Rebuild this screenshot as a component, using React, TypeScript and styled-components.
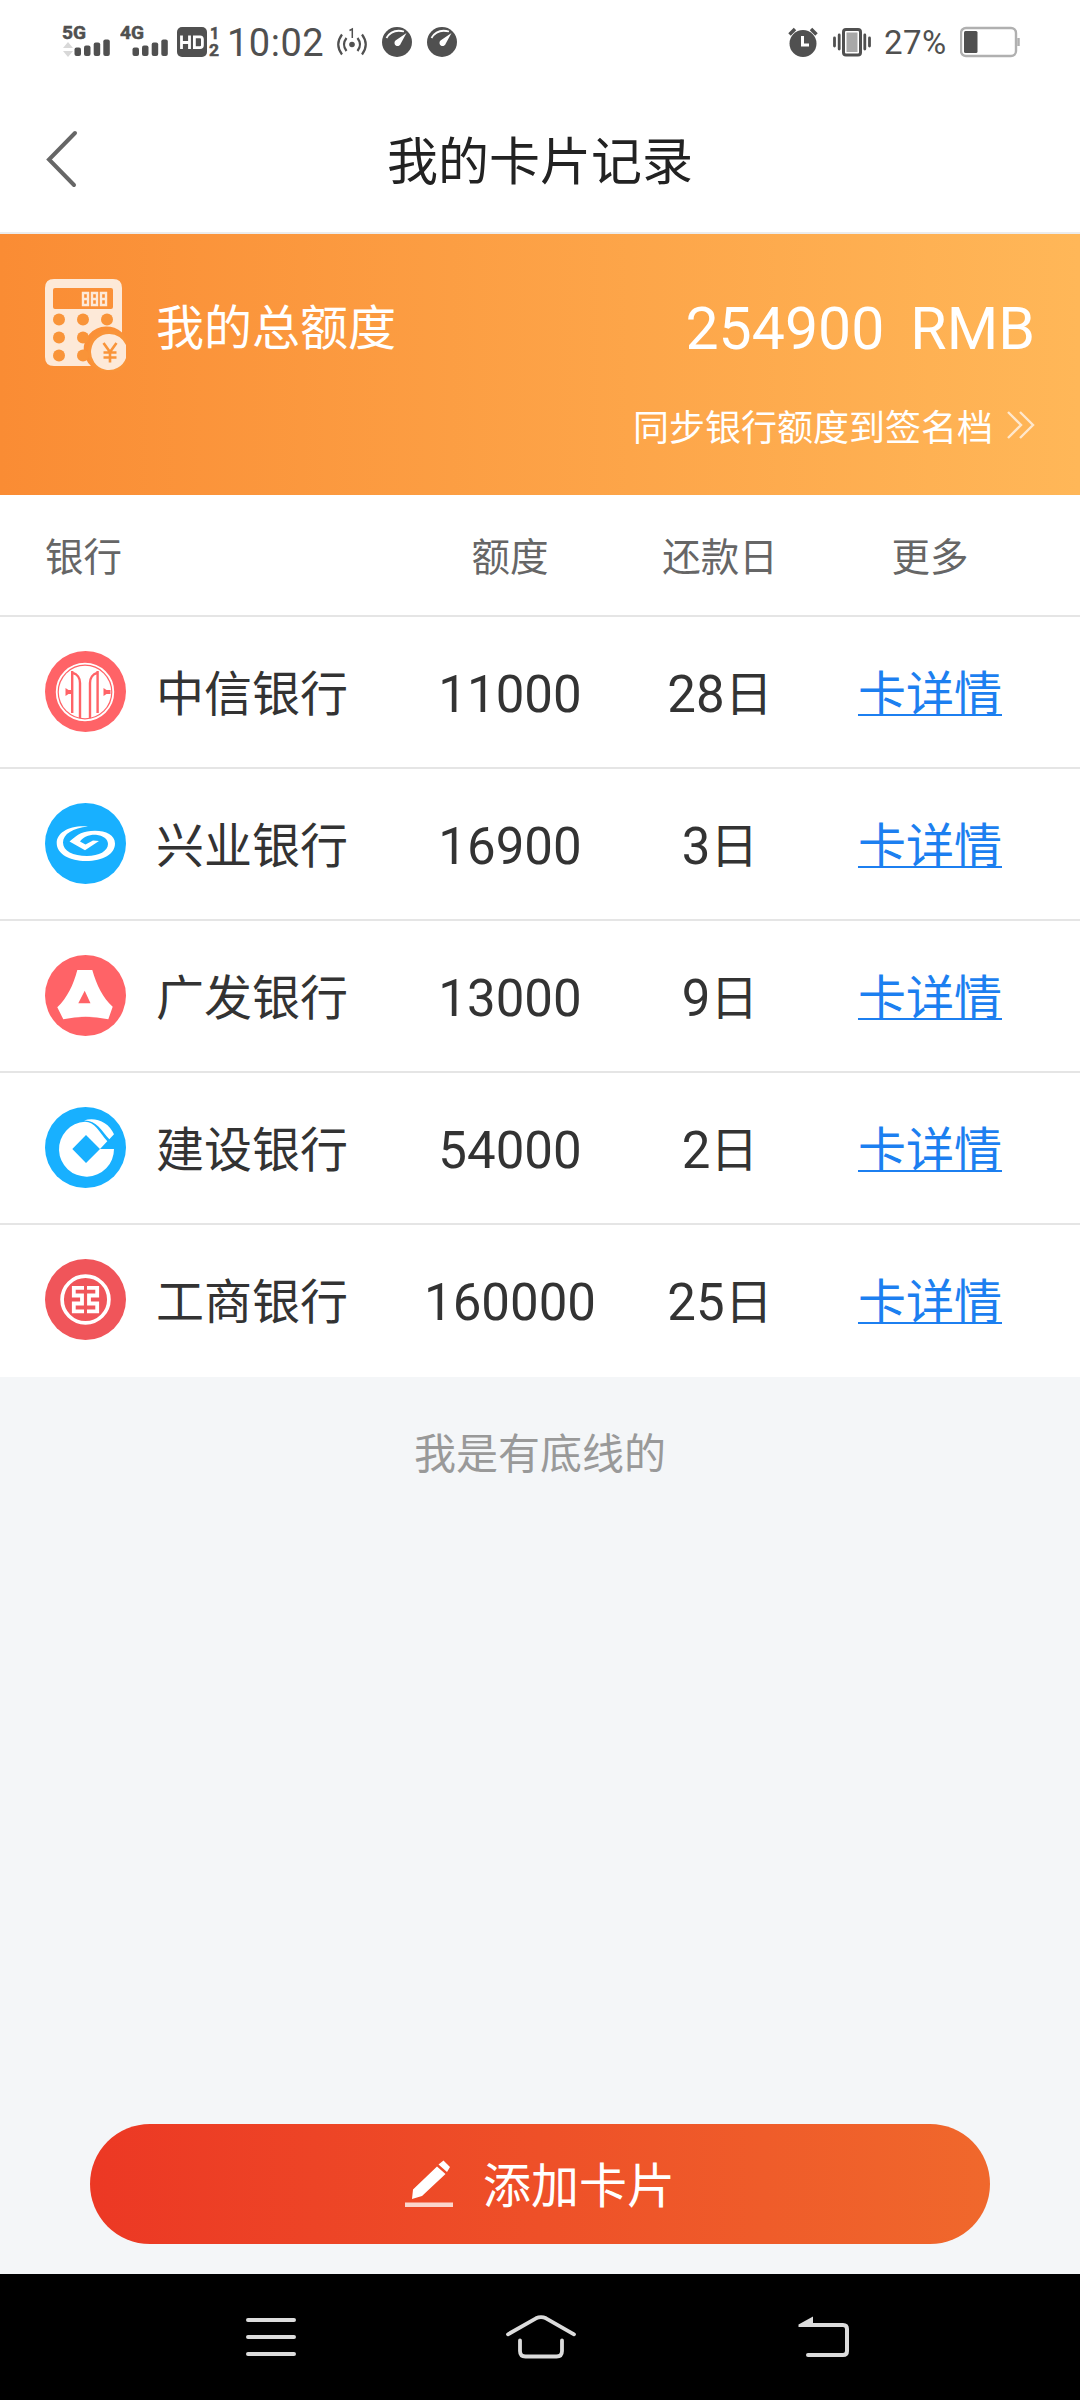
import styled, { createGlobalStyle } from 'styled-components';
import type { ReactNode } from 'react';

const GlobalStyle = createGlobalStyle`
  * {
    box-sizing: border-box;
  }

  body {
    margin: 0;
    background: #f4f6f8;
    font-family: Roboto, 'Noto Sans CJK SC', sans-serif;
    -webkit-font-smoothing: antialiased;
  }
`;

interface BankCard {
  name: string;
  limit: string;
  day: string;
  logo: ReactNode;
}

const CiticLogo = () => (
  <svg width="81" height="81" viewBox="0 0 81 81">
    <circle cx="40.5" cy="40.5" r="40.5" fill="#ff6367" />
    <circle cx="40" cy="41" r="28.3" fill="none" stroke="#fff" strokeWidth="1.8" />
    <circle cx="40" cy="41" r="26.2" fill="#fff" />
    <g fill="none" stroke="#ff6367" strokeWidth="2.4">
      <path d="M27.2 20v42M52.6 20v42" />
      <path d="M28 22c4 1 7 5 7 10v35M52 22c-4 1-7 5-7 10v35" />
    </g>
    <path d="M20.5 37l3 2h4v4h-4l-3 2zM58.5 37l3 2h4v4h-4l-3 2z" fill="#ff6367" />
  </svg>
);

const IndustrialLogo = () => (
  <svg width="81" height="81" viewBox="0 0 81 81">
    <circle cx="40.5" cy="40.5" r="40.5" fill="#18b0ff" />
    <path
      fill="#fff"
      d="M43 23.5C24 22 11.7 30 11.7 40C11.7 51 25 58 41 58C58 58 70 51 70 40.5C70 32 61 27.7 50 27.7C38 27.7 33 31 24.5 38.5L40 47.2L54 38L48 37.5L40.5 41.5L35 38.5C38 34 44 31.5 51 31.8C58 32.5 63 36 63 41C63 48 54 53 42 53C28 53 18 48 18 39.5C18 31 28 25 43 23.5Z"
    />
  </svg>
);

const GuangfaLogo = () => (
  <svg width="81" height="81" viewBox="0 0 81 81">
    <circle cx="40.5" cy="40.5" r="40.5" fill="#ff6367" />
    <path
      fill="#fff"
      fillRule="evenodd"
      d="M32.3 15H47.3C51.5 30 58 43 67.7 51.7L63.3 64.3Q40.5 59 18.3 64.3L12.3 52.3C22 43 28.5 30 32.3 15ZM39.7 35.7L33.3 48.3H45.5Z"
    />
  </svg>
);

const ConstructionLogo = () => (
  <svg width="81" height="81" viewBox="0 0 81 81">
    <circle cx="40.5" cy="40.5" r="40.5" fill="#18b0ff" />
    <path
      fill="#fff"
      fillRule="evenodd"
      d="M55 42L62.3 34.3C54 25 50 14.7 40 14.7A27.5 27.5 0 1 0 69 42ZM41 28L55 42L41 56L27.3 42Z"
    />
    <path fill="#fff" d="M39 13.5C50 9.5 64 15 69 27.3L64.3 32.3C57 24 51 13 39 13.5Z" />
  </svg>
);

const IcbcLogo = () => (
  <svg width="81" height="81" viewBox="0 0 81 81">
    <circle cx="40.5" cy="40.5" r="40.5" fill="#f0555a" />
    <circle cx="40.5" cy="40.5" r="23.4" fill="none" stroke="#fff" strokeWidth="3.7" />
    <g fill="none" stroke="#fff" strokeWidth="3.8">
      <path d="M39 28.8H28.8V36.5H37V44.5H28.8V52.3H39" />
      <path d="M42 28.8H52.2V36.5H44V44.5H52.2V52.3H42" />
    </g>
  </svg>
);

const cards: BankCard[] = [
  { name: '中信银行', limit: '11000', day: '28', logo: <CiticLogo /> },
  { name: '兴业银行', limit: '16900', day: '3', logo: <IndustrialLogo /> },
  { name: '广发银行', limit: '13000', day: '9', logo: <GuangfaLogo /> },
  { name: '建设银行', limit: '54000', day: '2', logo: <ConstructionLogo /> },
  { name: '工商银行', limit: '160000', day: '25', logo: <IcbcLogo /> },
];

const SignalIcon = ({ label, arrows }: { label: string; arrows?: boolean }) => (
  <svg width="48" height="46" viewBox="0 -6 48 46">
    <text
      x="0"
      y="14.5"
      fontSize="18.5"
      fontWeight="700"
      fill="#505050"
      stroke="#505050"
      strokeWidth="0.5"
      textLength="24"
      lengthAdjust="spacingAndGlyphs"
    >
      {label}
    </text>
    {arrows && <path d="M1 24l5-6 5 6zM1 27l5 6 5-6z" fill="#d8d8d8" />}
    <g fill="#505050">
      <rect x="12.5" y="23.5" width="6.5" height="8.5" rx="2" />
      <rect x="22" y="21.5" width="6.5" height="10.5" rx="2" />
      <rect x="31.7" y="18.5" width="6.5" height="13.5" rx="2" />
      <rect x="41.3" y="15.5" width="6.5" height="16.5" rx="2" />
    </g>
  </svg>
);

const HdIcon = () => (
  <svg width="44" height="46" viewBox="0 -6 44 46">
    <rect x="0" y="3" width="30" height="30" rx="5" fill="#505050" />
    <g fill="none" stroke="#fff" strokeWidth="2.8">
      <path d="M4.5 11.5v13.5M12.5 11.5v13.5M4.5 18.5h8" />
      <path d="M17.4 12.9h5.6q2.4 0 2.4 2.4v6q0 2.4-2.4 2.4h-5.6z" />
    </g>
    <g fill="#505050" stroke="#505050" strokeWidth="0.5" fontSize="16" fontWeight="700">
      <text x="33" y="14.5">1</text>
      <text x="32" y="32" textLength="10" lengthAdjust="spacingAndGlyphs">2</text>
    </g>
  </svg>
);

const HotspotIcon = () => (
  <svg width="30" height="34" viewBox="0 0 30 34">
    <circle cx="15" cy="20.5" r="2.8" fill="#505050" />
    <g fill="none" stroke="#505050" strokeWidth="2.2">
      <path d="M9.5 14q-5 6.5 0 13M20.5 14q5 6.5 0 13" />
      <path d="M5 10.5q-7.5 10 0 20M25 10.5q7.5 10 0 20" />
      <path d="M12.5 6.5l2.8-1.5v9" strokeWidth="1.5" />
    </g>
  </svg>
);

const GaugeIcon = () => (
  <svg width="30" height="34" viewBox="0 0 30 34">
    <circle cx="15" cy="18" r="15" fill="#505050" />
    <path d="M4.5 14Q10 4.5 22 7.5" fill="none" stroke="#fff" strokeWidth="1.8" />
    <path d="M24.5 9L18.8 19.5A3.2 3.2 0 1 1 13.5 16.5Z" fill="#fff" />
  </svg>
);

const AlarmIcon = () => (
  <svg width="30" height="34" viewBox="0 0 30 34">
    <circle cx="15" cy="19.5" r="13.5" fill="#505050" />
    <path d="M1.5 10.5L7 5M28.5 10.5L23 5" stroke="#505050" strokeWidth="3.5" />
    <path d="M14.5 12v9h6.5" fill="none" stroke="#fff" strokeWidth="3" />
  </svg>
);

const VibrateIcon = () => (
  <svg width="38" height="34" viewBox="0 0 38 34">
    <rect x="10.5" y="5.5" width="17" height="25.5" rx="2.5" fill="#fff" stroke="#505050" strokeWidth="3" />
    <rect x="13.5" y="8.5" width="11" height="19.5" fill="#a8a8a8" />
    <path d="M1.5 14v8M6.2 11v14M31.8 11v14M36.5 14v8" stroke="#505050" strokeWidth="2.8" strokeLinecap="round" />
  </svg>
);

const BatteryIcon = () => (
  <svg width="60" height="34" viewBox="0 0 60 34">
    <rect x="1" y="4" width="55" height="28" rx="5" fill="none" stroke="#b0b0b0" strokeWidth="2.4" />
    <rect x="4" y="7" width="13.5" height="22" rx="1.5" fill="#505050" />
    <path d="M58.5 14v8" stroke="#b0b0b0" strokeWidth="2.5" />
  </svg>
);

const CalculatorIcon = () => (
  <svg width="81" height="92" viewBox="0 0 81 92">
    <path
      fill="#fde9d8"
      fillRule="evenodd"
      d="M9 0H68Q77 0 77 9V53.5A22 22 0 0 0 46 87H9Q0 87 0 78V9Q0 0 9 0ZM10 9Q8 9 8 11V28Q8 30 10 30H66Q68 30 68 28V11Q68 9 66 9Z"
    />
    <g fill="#f99439">
      <circle cx="14" cy="40.5" r="6" />
      <circle cx="38" cy="40.5" r="6" />
      <circle cx="62" cy="40.5" r="6" />
      <circle cx="14" cy="58.5" r="6" />
      <circle cx="38" cy="58.5" r="6" />
      <circle cx="14" cy="76.5" r="6" />
      <circle cx="38" cy="76.5" r="6" />
      <circle cx="64.5" cy="72.5" r="21.5" />
    </g>
    <g fill="none" stroke="#fde9d8" strokeWidth="2.4">
      <path d="M38 14h5v12h-5zM38 20h5M47 14h5v12h-5zM47 20h5M56 14h5v12h-5zM56 20h5" />
    </g>
    <path fill="#fde9d8" d="M64.5 55A18 18 0 0 1 81 66V79A18 18 0 1 1 64.5 55Z" />
    <path d="M58.5 64l6.5 9 6.5-9M65 73v10.5M58.5 73.5h13M58.5 78.5h13" fill="none" stroke="#f99439" strokeWidth="2.6" />
  </svg>
);

const PencilIcon = () => (
  <svg width="48" height="48" viewBox="0 0 48 48">
    <path fill="#fff" d="M38.5 0.5L45 7L42 12L33.5 4.5ZM32 6.5L40.5 14L17 36L7 39L8 29.5Z" />
    <rect y="42.5" width="48" height="4.5" fill="#fbd5cb" />
  </svg>
);

export default function App() {
  return (
    <Screen>
      <GlobalStyle />
      <StatusBar>
        <StatusItem $gap={10}><SignalIcon label="5G" arrows /></StatusItem>
        <StatusItem $gap={9}><SignalIcon label="4G" /></StatusItem>
        <StatusItem $gap={6}><HdIcon /></StatusItem>
        <Clock>10:02</Clock>
        <StatusItem $gap={15}><HotspotIcon /></StatusItem>
        <StatusItem $gap={15}><GaugeIcon /></StatusItem>
        <StatusItem $gap={0}><GaugeIcon /></StatusItem>
        <StatusSpacer />
        <StatusItem $gap={15}><AlarmIcon /></StatusItem>
        <StatusItem $gap={13}><VibrateIcon /></StatusItem>
        <BatteryText>27%</BatteryText>
        <StatusItem $gap={0}><BatteryIcon /></StatusItem>
      </StatusBar>

      <TitleBar>
        <BackButton aria-label="返回">
          <svg width="34" height="58" viewBox="0 0 34 58">
            <path d="M30 3L4 29.5L29 55" fill="none" stroke="#666" strokeWidth="4" strokeLinecap="round" />
          </svg>
        </BackButton>
        <Title>我的卡片记录</Title>
      </TitleBar>

      <Banner>
        <TotalRow>
          <CalculatorIcon />
          <TotalLabel>我的总额度</TotalLabel>
          <TotalValue>
            <span>254900</span>
            <span>RMB</span>
          </TotalValue>
        </TotalRow>
        <SyncLink>
          同步银行额度到签名档
          <svg width="28" height="28" viewBox="0 0 28 28">
            <path d="M1 1l13 13L1 27M13 1l13 13-13 13" fill="none" stroke="#ffe8cc" strokeWidth="2.4" />
          </svg>
        </SyncLink>
      </Banner>

      <HeadRow>
        <span>银行</span>
        <HeadCell>额度</HeadCell>
        <HeadCell>还款日</HeadCell>
        <HeadCell>更多</HeadCell>
      </HeadRow>
      {cards.map((card) => (
        <CardRow key={card.name}>
          <Bank>
            {card.logo}
            <BankName>{card.name}</BankName>
          </Bank>
          <Cell>{card.limit}</Cell>
          <Cell>
            {card.day}
            <DayUnit>日</DayUnit>
          </Cell>
          <Cell>
            <DetailLink>卡详情</DetailLink>
          </Cell>
        </CardRow>
      ))}

      <EndNote>我是有底线的</EndNote>

      <AddButton>
        <PencilIcon />
        <AddLabel>添加卡片</AddLabel>
      </AddButton>

      <NavBar>
        <NavItem>
          <svg width="50" height="38" viewBox="0 0 50 38">
            <path d="M2 2h46M2 19h46M2 36h46" stroke="#dcdcdc" strokeWidth="4" strokeLinecap="round" />
          </svg>
        </NavItem>
        <NavItem>
          <svg width="70" height="44" viewBox="0 0 70 44">
            <g fill="none" stroke="#dcdcdc" strokeWidth="3.8" strokeLinecap="round" strokeLinejoin="round">
              <path d="M2 19.3L30 3.3Q35 0.8 40 3.3L68 19.3" />
              <path d="M14 25.5V36Q14 41.5 19.5 41.5H50.5Q56 41.5 56 36V25.5" />
            </g>
          </svg>
        </NavItem>
        <NavItem>
          <svg width="52" height="42" viewBox="0 0 52 42">
            <path d="M12 9H45Q49 9 49 13V35Q49 39 45 39H10" fill="none" stroke="#dcdcdc" strokeWidth="4" strokeLinecap="round" />
            <path d="M0.5 8.5L15 0.5V11H0.5Z" fill="#dcdcdc" />
          </svg>
        </NavItem>
      </NavBar>
    </Screen>
  );
}

const Screen = styled.div`
  display: flex;
  flex-direction: column;
  width: 1080px;
  height: 2400px;
  background: #f4f6f8;
  overflow: hidden;
`;

const StatusBar = styled.div`
  display: flex;
  align-items: center;
  height: 84px;
  padding: 0 60px 2px 62px;
  background: #fff;
  color: #505050;
`;

const StatusItem = styled.span<{ $gap: number }>`
  display: flex;
  margin-right: ${({ $gap }) => $gap}px;
`;

const StatusSpacer = styled.span`
  flex: 1;
`;

const Clock = styled.span`
  width: 110px;
  padding-top: 3px;
  font-size: 38px;
  line-height: 34px;
  letter-spacing: 0.5px;
`;

const BatteryText = styled.span`
  width: 76px;
  padding-top: 3px;
  font-size: 33px;
  line-height: 34px;
  letter-spacing: 0.5px;
`;

const TitleBar = styled.header`
  display: grid;
  grid-template-columns: 120px 1fr 120px;
  align-items: center;
  height: 150px;
  background: #fff;
  border-bottom: 2px solid #ececec;
`;

const BackButton = styled.button`
  display: flex;
  padding: 2px 0 0 45px;
  background: none;
  border: 0;
`;

const Title = styled.h1`
  margin: 0;
  padding-top: 10px;
  color: #222;
  font-size: 51px;
  font-weight: 400;
  line-height: 72px;
  text-align: center;
`;

const Banner = styled.section`
  height: 261px;
  padding: 45px 45px 0;
  background: linear-gradient(90deg, #fa8c34, #ffb758);
  color: #fff;
`;

const TotalRow = styled.div`
  display: flex;
  align-items: center;
  height: 92px;
`;

const TotalLabel = styled.span`
  margin-left: 30px;
  padding-top: 8px;
  font-size: 48px;
  line-height: 72px;
`;

const TotalValue = styled.span`
  display: flex;
  gap: 26px;
  margin-left: auto;
  padding-top: 7px;
  font-size: 59px;
  line-height: 72px;
`;

const SyncLink = styled.div`
  display: flex;
  align-items: center;
  justify-content: flex-end;
  gap: 14px;
  height: 54px;
  margin-top: 27px;
  font-size: 36px;
`;

const HeadRow = styled.div`
  display: grid;
  grid-template-columns: 360px repeat(3, 210px);
  align-items: center;
  height: 122px;
  padding: 0 45px 3px;
  background: #fff;
  border-bottom: 2px solid #e5e5e5;
  color: #666;
  font-size: 38.5px;
`;

const HeadCell = styled.span`
  text-align: center;
`;

const CardRow = styled.div`
  display: grid;
  grid-template-columns: 360px repeat(3, 210px);
  align-items: center;
  height: 152px;
  padding: 0 45px 1px;
  background: #fff;
  border-bottom: 2px solid #e5e5e5;
  color: #333;

  &:last-of-type {
    border-bottom-color: #fff;
  }
`;

const Bank = styled.div`
  display: flex;
  align-items: center;
`;

const BankName = styled.span`
  margin-left: 30px;
  padding-top: 7px;
  font-size: 48px;
  line-height: 72px;
`;

const Cell = styled.span`
  display: flex;
  align-items: center;
  justify-content: center;
  padding-top: 7px;
  font-size: 51px;
  line-height: 72px;
`;

const DayUnit = styled.span`
  font-size: 48px;
`;

const DetailLink = styled.a`
  color: #1c7ff0;
  font-size: 48px;
  text-decoration: underline;
  text-decoration-thickness: 2px;
  text-underline-offset: 3px;
`;

const EndNote = styled.p`
  margin: 47px 0 0;
  color: #999;
  font-size: 42px;
  line-height: 62px;
  text-align: center;
`;

const AddButton = styled.button`
  display: flex;
  align-items: center;
  justify-content: center;
  gap: 30px;
  width: 900px;
  height: 120px;
  margin: auto auto 30px;
  background: linear-gradient(90deg, #ec3824, #f0682c);
  border: 0;
  border-radius: 60px;
  color: #fff;
  font-family: inherit;
  font-size: 48px;
`;

const AddLabel = styled.span`
  padding-bottom: 4px;
`;

const NavBar = styled.nav`
  display: grid;
  grid-template-columns: 276px 263px 304px;
  align-items: center;
  height: 126px;
  padding-left: 133px;
  background: #000;
`;

const NavItem = styled.span`
  display: flex;
  justify-content: center;
`;
